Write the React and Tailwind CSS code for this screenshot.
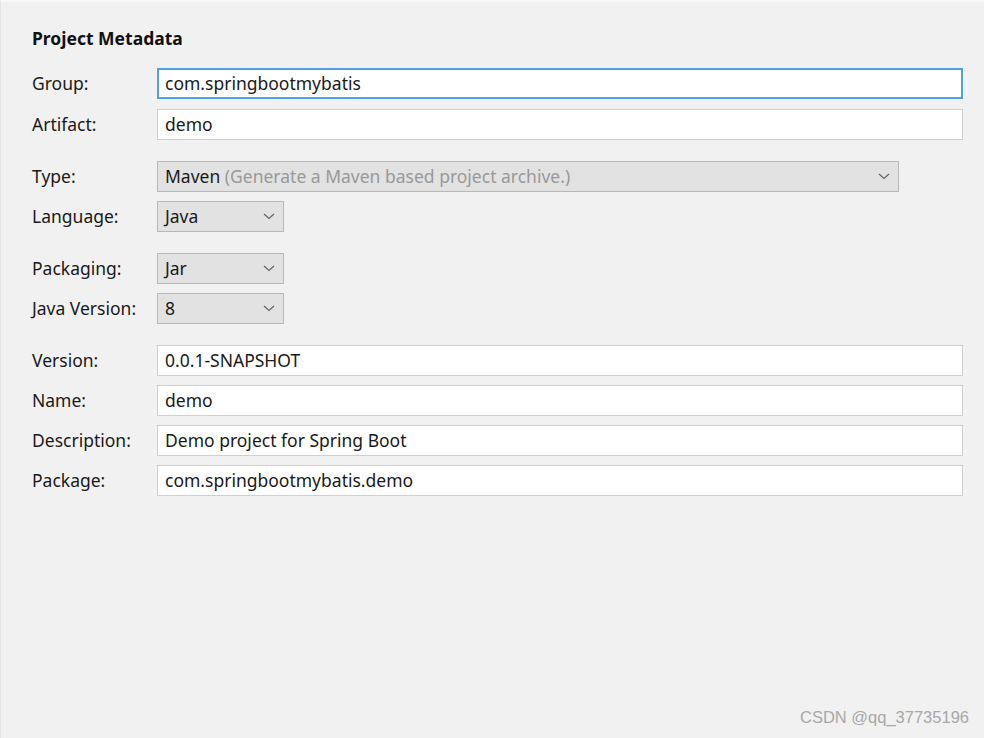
import React from "react";

const font = { fontFamily: '"Noto Sans", "Open Sans", sans-serif' };

function Chevron() {
  return (
    <svg width="12" height="7" viewBox="0 0 12 7" className="shrink-0">
      <path d="M1 1 L6 5.5 L11 1" fill="none" stroke="#666" strokeWidth="1.3" />
    </svg>
  );
}

function Label({ children }) {
  return (
    <div className="w-[125px] shrink-0 text-[17.5px] text-[#1a1a1a] whitespace-nowrap">{children}</div>
  );
}

function TextRow({ label, value, focused }) {
  return (
    <div className="flex items-center h-[31px]">
      <Label>{label}</Label>
      <div
        className={
          focused
            ? "flex-1 h-full bg-white border-2 border-[#4da3e6] flex items-center pl-[6px] text-[17.5px] text-[#1a1a1a]"
            : "flex-1 h-full bg-white border border-[#cfcfcf] flex items-center pl-[7px] text-[17.5px] text-[#1a1a1a]"
        }
      >
        {value}
      </div>
    </div>
  );
}

function SelectRow({ label, value, wide }) {
  return (
    <div className="flex items-center h-[31px]">
      <Label>{label}</Label>
      <div
        className={
          (wide ? "w-[742px] " : "w-[127px] ") +
          "h-full bg-[#e2e2e2] border border-[#b8b8b8] flex items-center justify-between pl-[7px] pr-[8px] text-[17.5px] text-[#1a1a1a]"
        }
      >
        <div className="whitespace-nowrap">{value}</div>
        <Chevron />
      </div>
    </div>
  );
}

export default function App() {
  return (
    <div
      className="w-[984px] h-[738px] bg-[#f1f1f1] border-t-2 border-[#f8f8f8] border-l border-l-[#e4e4e4] flex flex-col relative"
      style={font}
    >
      <div className="pl-[31px] pr-[21px] pt-[25px] flex flex-col">
        <div className="text-[17.5px] font-bold text-[#111] h-[22px] leading-[22px]">Project Metadata</div>
        <div className="flex flex-col gap-[10px] mt-[19px]">
          <TextRow label="Group:" value="com.springbootmybatis" focused />
          <TextRow label="Artifact:" value="demo" />
        </div>
        <div className="flex flex-col gap-[9px] mt-[21px]">
          <SelectRow
            label="Type:"
            wide
            value={
              <span>
                Maven <span className="text-[#999]">(Generate a Maven based project archive.)</span>
              </span>
            }
          />
          <SelectRow label="Language:" value="Java" />
        </div>
        <div className="flex flex-col gap-[9px] mt-[21px]">
          <SelectRow label="Packaging:" value="Jar" />
          <SelectRow label="Java Version:" value="8" />
        </div>
        <div className="flex flex-col gap-[9px] mt-[21px]">
          <TextRow label="Version:" value="0.0.1-SNAPSHOT" />
          <TextRow label="Name:" value="demo" />
          <TextRow label="Description:" value="Demo project for Spring Boot" />
          <TextRow label="Package:" value="com.springbootmybatis.demo" />
        </div>
      </div>
      <div
        className="absolute right-[15px] bottom-[8px] text-[16.5px] text-[#a8a8a8]"
        style={{ fontFamily: '"Liberation Sans", Arial, sans-serif' }}
      >
        CSDN @qq_37735196
      </div>
    </div>
  );
}
